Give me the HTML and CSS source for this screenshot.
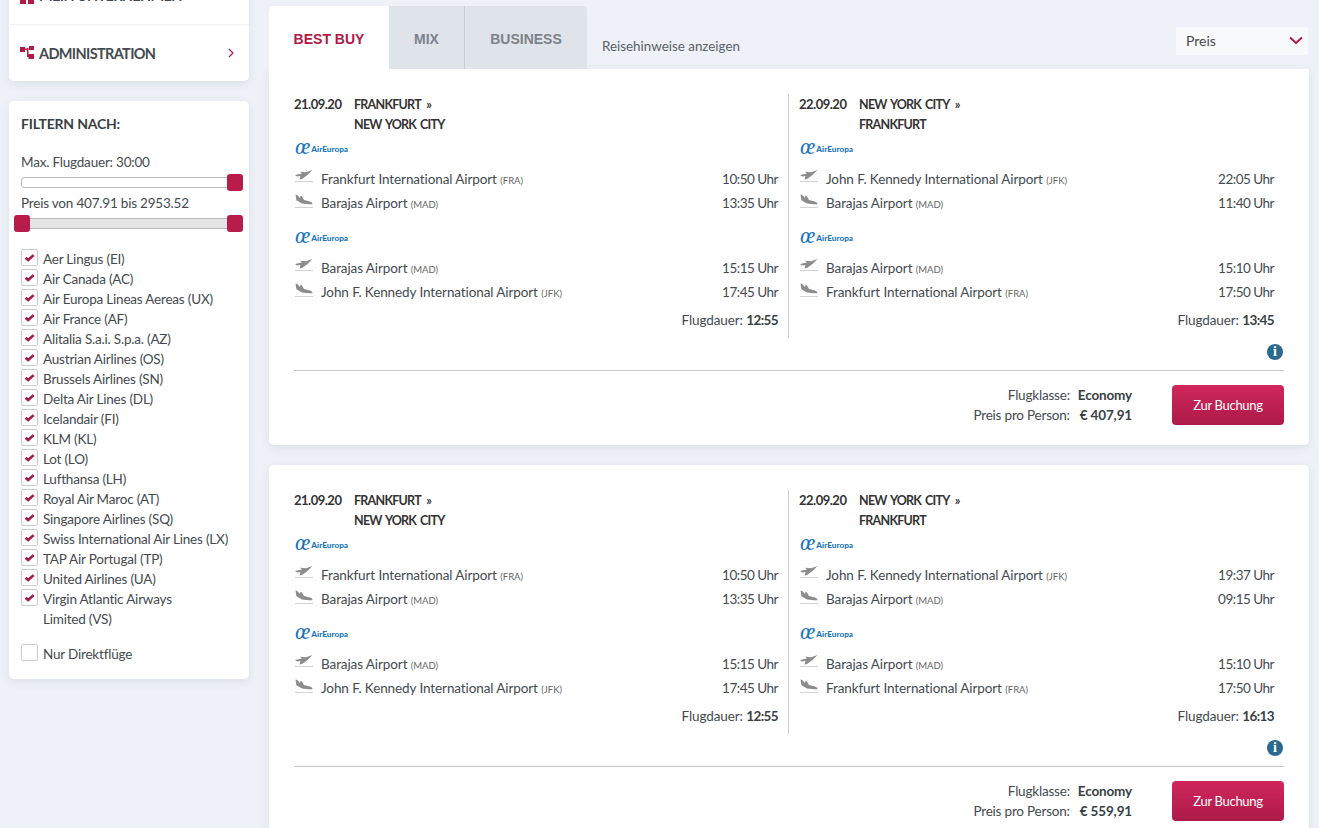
FILE: index.html
```html
<!DOCTYPE html>
<html lang="de">
<head>
<meta charset="utf-8">
<title>Flugsuche</title>
<link rel="stylesheet" href="styles.css">
</head>
<body>
<svg class="defs" width="0" height="0" aria-hidden="true">
  <symbol id="dep" viewBox="0 0 20 16"><path d="M18.5 1 L12 3.2 L6 2.8 L8 4.4 L1 6 L3 7.6 L6.5 7 L5.5 10.5 L8 10 L13.5 6 Z" fill="#8c8c8c"/><rect x="1" y="12" width="18" height="1" fill="#d2d2d2"/></symbol>
  <symbol id="arr" viewBox="0 0 20 16"><path d="M1.5 1.5 L3.2 2 L6 5 L6.6 2.8 L8 3.4 L10 7 L16 8.6 Q19 10 18.5 11 Q18 11.6 15 11.2 L8 10.4 L2.4 7.2 Z" fill="#8c8c8c"/><rect x="1" y="14" width="18" height="1" fill="#d2d2d2"/></symbol>
  <symbol id="chk" viewBox="0 0 17 17"><path d="M4 8.8 L7 11.4 L13.2 5.8" fill="none" stroke="#a81a45" stroke-width="3"/></symbol>
</svg>
<div class="page">
  <aside class="sidebar">
    <nav class="card menu">
      <div class="menu-item clipped">
        <svg class="menu-icon" viewBox="0 0 14 14"><path d="M0 0h6v6H0zM8 0h6v6H8zM0 8h6v6H0zM8 8h6v6H8z" fill="#b01a47"/></svg>
        <span>MEIN UNTERNEHMEN</span>
      </div>
      <div class="menu-item">
        <svg class="menu-icon" viewBox="0 0 14 14"><path d="M0 1h5v5H0zM5 2.5h2v1.5H5zM7 2h1.5v9H7zM9 0h5v4H9zM8.5 8H14v5H8.5z" fill="#b01a47"/></svg>
        <span>ADMINISTRATION</span>
        <svg class="menu-arrow" viewBox="0 0 8 10"><path d="M2 1 L6 5 L2 9" fill="none" stroke="#b01a47" stroke-width="1.2"/></svg>
      </div>
    </nav>
    <section class="card filter">
      <h2 class="filter-title">FILTERN NACH:</h2>
      <div class="slider-label">Max. Flugdauer: 30:00</div>
      <div class="slider white"><i class="handle right"></i></div>
      <div class="slider-label second">Preis von 407.91 bis 2953.52</div>
      <div class="slider grey"><i class="handle left"></i><i class="handle right"></i></div>
      <ul class="airlines">
        <li><span class="box"><svg><use href="#chk"/></svg></span>Aer Lingus (EI)</li>
        <li><span class="box"><svg><use href="#chk"/></svg></span>Air Canada (AC)</li>
        <li><span class="box"><svg><use href="#chk"/></svg></span>Air Europa Lineas Aereas (UX)</li>
        <li><span class="box"><svg><use href="#chk"/></svg></span>Air France (AF)</li>
        <li><span class="box"><svg><use href="#chk"/></svg></span>Alitalia S.a.i. S.p.a. (AZ)</li>
        <li><span class="box"><svg><use href="#chk"/></svg></span>Austrian Airlines (OS)</li>
        <li><span class="box"><svg><use href="#chk"/></svg></span>Brussels Airlines (SN)</li>
        <li><span class="box"><svg><use href="#chk"/></svg></span>Delta Air Lines (DL)</li>
        <li><span class="box"><svg><use href="#chk"/></svg></span>Icelandair (FI)</li>
        <li><span class="box"><svg><use href="#chk"/></svg></span>KLM (KL)</li>
        <li><span class="box"><svg><use href="#chk"/></svg></span>Lot (LO)</li>
        <li><span class="box"><svg><use href="#chk"/></svg></span>Lufthansa (LH)</li>
        <li><span class="box"><svg><use href="#chk"/></svg></span>Royal Air Maroc (AT)</li>
        <li><span class="box"><svg><use href="#chk"/></svg></span>Singapore Airlines (SQ)</li>
        <li><span class="box"><svg><use href="#chk"/></svg></span>Swiss International Air Lines (LX)</li>
        <li><span class="box"><svg><use href="#chk"/></svg></span>TAP Air Portugal (TP)</li>
        <li><span class="box"><svg><use href="#chk"/></svg></span>United Airlines (UA)</li>
        <li><span class="box"><svg><use href="#chk"/></svg></span><span class="wrap">Virgin Atlantic Airways Limited (VS)</span></li>
        <li class="direct"><span class="box"></span>Nur Direktflüge</li>
      </ul>
    </section>
  </aside>
  <main class="main">
    <div class="topbar">
      <div class="tab active">BEST BUY</div>
      <div class="tab mix">MIX</div>
      <div class="tab business">BUSINESS</div>
      <span class="hint">Reisehinweise anzeigen</span>
      <div class="select"><span>Preis</span><svg viewBox="0 0 14 9"><path d="M1 1.5 L7 7 L13 1.5" fill="none" stroke="#b01a47" stroke-width="2"/></svg></div>
    </div>

    <article class="card offer first">
      <div class="legs">
        <div class="leg out">
          <div class="leg-head"><span class="date">21.09.20</span><span class="route">FRANKFURT <i class="sep">»</i><br>NEW YORK CITY</span></div>
          <div class="logo"><span class="logo-mark">œ</span><span class="logo-name">AirEuropa</span></div>
          <div class="row"><svg class="plane"><use href="#dep"/></svg><span class="airport">Frankfurt International Airport <small>(FRA)</small></span><span class="time">10:50 Uhr</span></div>
          <div class="row"><svg class="plane"><use href="#arr"/></svg><span class="airport">Barajas Airport <small>(MAD)</small></span><span class="time">13:35 Uhr</span></div>
          <div class="logo next"><span class="logo-mark">œ</span><span class="logo-name">AirEuropa</span></div>
          <div class="row"><svg class="plane"><use href="#dep"/></svg><span class="airport">Barajas Airport <small>(MAD)</small></span><span class="time">15:15 Uhr</span></div>
          <div class="row"><svg class="plane"><use href="#arr"/></svg><span class="airport">John F. Kennedy International Airport <small>(JFK)</small></span><span class="time">17:45 Uhr</span></div>
          <div class="duration">Flugdauer: <b>12:55</b></div>
        </div>
        <div class="leg back">
          <div class="leg-head"><span class="date">22.09.20</span><span class="route">NEW YORK CITY <i class="sep">»</i><br>FRANKFURT</span></div>
          <div class="logo"><span class="logo-mark">œ</span><span class="logo-name">AirEuropa</span></div>
          <div class="row"><svg class="plane"><use href="#dep"/></svg><span class="airport">John F. Kennedy International Airport <small>(JFK)</small></span><span class="time">22:05 Uhr</span></div>
          <div class="row"><svg class="plane"><use href="#arr"/></svg><span class="airport">Barajas Airport <small>(MAD)</small></span><span class="time">11:40 Uhr</span></div>
          <div class="logo next"><span class="logo-mark">œ</span><span class="logo-name">AirEuropa</span></div>
          <div class="row"><svg class="plane"><use href="#dep"/></svg><span class="airport">Barajas Airport <small>(MAD)</small></span><span class="time">15:10 Uhr</span></div>
          <div class="row"><svg class="plane"><use href="#arr"/></svg><span class="airport">Frankfurt International Airport <small>(FRA)</small></span><span class="time">17:50 Uhr</span></div>
          <div class="duration">Flugdauer: <b>13:45</b></div>
        </div>
      </div>
      <div class="info-row"><span class="info">i</span></div>
      <div class="offer-foot">
        <div class="fare"><span>Flugklasse:</span><b>Economy</b><span>Preis pro Person:</span><b>€ 407,91</b></div>
        <button class="book">Zur Buchung</button>
      </div>
    </article>

    <article class="card offer">
      <div class="legs">
        <div class="leg out">
          <div class="leg-head"><span class="date">21.09.20</span><span class="route">FRANKFURT <i class="sep">»</i><br>NEW YORK CITY</span></div>
          <div class="logo"><span class="logo-mark">œ</span><span class="logo-name">AirEuropa</span></div>
          <div class="row"><svg class="plane"><use href="#dep"/></svg><span class="airport">Frankfurt International Airport <small>(FRA)</small></span><span class="time">10:50 Uhr</span></div>
          <div class="row"><svg class="plane"><use href="#arr"/></svg><span class="airport">Barajas Airport <small>(MAD)</small></span><span class="time">13:35 Uhr</span></div>
          <div class="logo next"><span class="logo-mark">œ</span><span class="logo-name">AirEuropa</span></div>
          <div class="row"><svg class="plane"><use href="#dep"/></svg><span class="airport">Barajas Airport <small>(MAD)</small></span><span class="time">15:15 Uhr</span></div>
          <div class="row"><svg class="plane"><use href="#arr"/></svg><span class="airport">John F. Kennedy International Airport <small>(JFK)</small></span><span class="time">17:45 Uhr</span></div>
          <div class="duration">Flugdauer: <b>12:55</b></div>
        </div>
        <div class="leg back">
          <div class="leg-head"><span class="date">22.09.20</span><span class="route">NEW YORK CITY <i class="sep">»</i><br>FRANKFURT</span></div>
          <div class="logo"><span class="logo-mark">œ</span><span class="logo-name">AirEuropa</span></div>
          <div class="row"><svg class="plane"><use href="#dep"/></svg><span class="airport">John F. Kennedy International Airport <small>(JFK)</small></span><span class="time">19:37 Uhr</span></div>
          <div class="row"><svg class="plane"><use href="#arr"/></svg><span class="airport">Barajas Airport <small>(MAD)</small></span><span class="time">09:15 Uhr</span></div>
          <div class="logo next"><span class="logo-mark">œ</span><span class="logo-name">AirEuropa</span></div>
          <div class="row"><svg class="plane"><use href="#dep"/></svg><span class="airport">Barajas Airport <small>(MAD)</small></span><span class="time">15:10 Uhr</span></div>
          <div class="row"><svg class="plane"><use href="#arr"/></svg><span class="airport">Frankfurt International Airport <small>(FRA)</small></span><span class="time">17:50 Uhr</span></div>
          <div class="duration">Flugdauer: <b>16:13</b></div>
        </div>
      </div>
      <div class="info-row"><span class="info">i</span></div>
      <div class="offer-foot">
        <div class="fare"><span>Flugklasse:</span><b>Economy</b><span>Preis pro Person:</span><b>€ 559,91</b></div>
        <button class="book">Zur Buchung</button>
      </div>
    </article>
  </main>
</div>
</body>
</html>
```
FILE: styles.css
```css
* { box-sizing: border-box; }
html, body { margin: 0; height: 100%; overflow: hidden; }
body {
  background: #eef1f7;
  font-family: "Lato", "Liberation Sans", sans-serif;
  font-size: 13.5px;
  letter-spacing: -.2px;
  color: #444a50;
}
.defs { position: absolute; }
.page { display: flex; gap: 20px; padding-left: 9px; height: 828px; overflow: hidden; }
.card { background: #fff; border-radius: 5px; box-shadow: 0 3px 10px rgba(60, 80, 120, .10); }

.sidebar { width: 240px; flex: none; display: flex; flex-direction: column; gap: 20px; margin-top: -32px; }
.menu { height: 113px; }
.menu-item { height: 56px; display: flex; align-items: center; padding: 0 12px 0 11px; font-size: 14.5px; letter-spacing: -.65px; font-weight: 700; color: #444a50; }
.menu-item.clipped { height: 57px; border-bottom: 1px solid #f0f0f0; padding-bottom: 20px; align-items: flex-end; }
.menu-icon { width: 14px; height: 14px; margin-right: 5px; flex: none; }
.menu-arrow { width: 8px; height: 10px; margin-left: auto; margin-right: 2px; }

.filter { height: 578px; padding: 13px 12px; }
.filter-title { margin: 0 0 18px; font-size: 14px; letter-spacing: -.2px; line-height: 20px; font-weight: 700; color: #3a3f45; }
.slider-label { line-height: 20px; }
.slider-label.second { margin-top: 5px; }
.slider { position: relative; height: 11px; margin: 5px 1px 0 0; border: 1px solid #bbb; border-radius: 3px; }
.slider.white { background: #fff; }
.slider.grey { background: #e4e4e4; }
.handle { position: absolute; top: -4px; width: 16px; height: 17px; background: #b81c4b; border-radius: 3px; }
.handle.right { right: -8px; }
.handle.left { left: -8px; }

.airlines { list-style: none; margin: 0; padding: 0; margin-top: 20px; }
.airlines li { display: flex; line-height: 20px; }
.box { flex: none; width: 17px; height: 17px; margin-right: 5px; border: 1px solid #ccc; border-radius: 2px; background: #fff; }
.box svg { display: block; width: 15px; height: 15px; }
.wrap { width: 150px; }
.airlines li.direct { margin-top: 15px; }

.main { flex: none; width: 1040px; padding-top: 6px; }
.topbar { position: relative; display: flex; align-items: flex-end; height: 63px; }
.tab { height: 63px; display: flex; align-items: center; justify-content: center; padding-top: 2px; font-family: "Liberation Sans", sans-serif; font-weight: 700; font-size: 14px; letter-spacing: 0; color: #7d8288; background: #dfe3ea; }
.tab.active { width: 120px; background: #fff; color: #b01a47; border-radius: 5px 0 0 0; }
.tab.mix { width: 76px; border-right: 1px solid #c8ccd3; }
.tab.business { width: 122px; border-radius: 0 5px 0 0; }
.hint { margin: 0 0 15px 15px; font-size: 13.4px; letter-spacing: 0; line-height: 16px; color: #5a5f65; }
.select { margin-left: auto; margin-bottom: 14px; margin-right: 1px; width: 132px; height: 28px; display: flex; align-items: center; justify-content: space-between; padding: 0 5px 2px 10px; background: #f7f9fb; border-radius: 2px; font-size: 14px; letter-spacing: 0; color: #4a4a4a; }
.select svg { width: 14px; height: 9px; }

.offer { height: 376px; padding: 25px 25px 0; margin-top: 20px; }
.offer.first { margin-top: 0; border-radius: 0 0 5px 5px; }
.legs { display: flex; height: 244px; }
.leg { padding-right: 10px; }
.leg.out { width: 495px; border-right: 1px solid #d0d0d0; }
.leg.back { width: 495px; padding-left: 10px; }
.leg-head { display: flex; line-height: 20px; height: 40px; color: #333; font-size: 13px; }
.date { width: 60px; font-weight: 700; letter-spacing: -.5px; }
.route { font-size: 12.5px; font-weight: 700; letter-spacing: -.75px; word-spacing: 1.5px; padding-top: 1px; }
.sep { font-style: normal; margin-left: 2px; }
.logo { display: flex; align-items: center; height: 20px; margin: 5px 0 8px; color: #1b75bc; }
.logo.next { margin-top: 13px; }
.logo-mark { font-family: "Liberation Serif", serif; font-style: italic; font-size: 23px; line-height: 14px; padding-bottom: 5px; margin: 0 1px 0 1px; letter-spacing: 0; }
.logo-name { font-size: 8.2px; font-weight: 900; letter-spacing: 0; }
.row { display: flex; align-items: center; height: 24px; }
.plane { width: 20px; height: 16px; margin: 0 7px 4px 0; flex: none; }
.airport { flex: 1; letter-spacing: -.1px; padding-bottom: 1px; }
.airport small { font-size: 9.5px; letter-spacing: 0; color: #666; }
.time { letter-spacing: -.5px; padding-bottom: 1px; }
.duration { margin-top: 6px; line-height: 20px; text-align: right; letter-spacing: -.1px; }
.duration b { color: #3a3f45; letter-spacing: -.6px; }
.info-row { display: flex; justify-content: flex-end; height: 33px; padding: 6px 1px 0 0; border-bottom: 1px solid #c9c9c9; }
.info { width: 16px; height: 16px; border-radius: 50%; background: #2a6a8e; color: #fff; font-family: "Liberation Serif", serif; font-weight: 700; font-size: 14px; line-height: 16px; text-align: center; letter-spacing: 0; }
.offer-foot { display: flex; justify-content: flex-end; align-items: center; gap: 40px; margin-top: 14px; }
.fare { display: grid; grid-template-columns: auto auto; column-gap: 8px; line-height: 20px; text-align: right; }
.fare b { color: #3a3f45; letter-spacing: -.15px; }
.book { width: 112px; height: 40px; border: 0; border-radius: 4px; background: linear-gradient(#d0265c, #ac1a48); color: #fff; font: 13px "Lato", sans-serif; letter-spacing: -.3px; }
```
